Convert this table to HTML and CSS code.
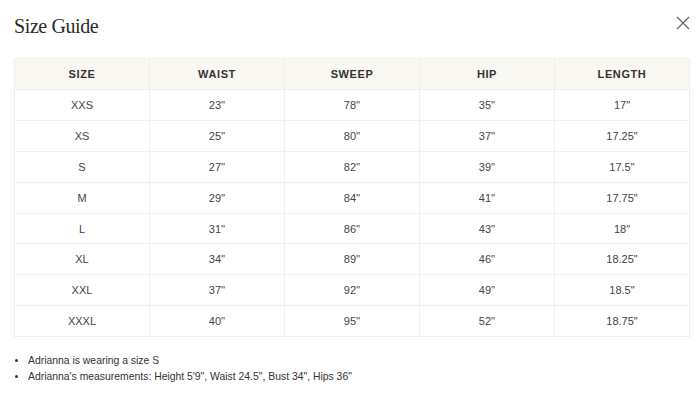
FILE: index.html
```html
<!DOCTYPE html>
<html>
<head>
<meta charset="utf-8">
<link rel="stylesheet" href="styles.css">
</head>
<body>
<div class="modal">
  <div class="head">
    <h1 class="title">Size Guide</h1>
    <button class="close" aria-label="Close">
      <svg width="14" height="14" viewBox="0 0 14 14"><path d="M1 1L13 13M13 1L1 13" stroke="#666" stroke-width="1.2" fill="none"/></svg>
    </button>
  </div>
  <table class="sizes">
    <thead>
      <tr><th>SIZE</th><th>WAIST</th><th>SWEEP</th><th>HIP</th><th>LENGTH</th></tr>
    </thead>
    <tbody>
      <tr><td>XXS</td><td>23''</td><td>78''</td><td>35''</td><td>17"</td></tr>
      <tr><td>XS</td><td>25''</td><td>80''</td><td>37''</td><td>17.25"</td></tr>
      <tr><td>S</td><td>27''</td><td>82''</td><td>39''</td><td>17.5"</td></tr>
      <tr><td>M</td><td>29''</td><td>84''</td><td>41''</td><td>17.75"</td></tr>
      <tr><td>L</td><td>31''</td><td>86''</td><td>43''</td><td>18"</td></tr>
      <tr><td>XL</td><td>34''</td><td>89''</td><td>46''</td><td>18.25"</td></tr>
      <tr><td>XXL</td><td>37''</td><td>92''</td><td>49''</td><td>18.5"</td></tr>
      <tr><td>XXXL</td><td>40''</td><td>95''</td><td>52''</td><td>18.75"</td></tr>
    </tbody>
  </table>
  <ul class="notes">
    <li>Adrianna is wearing a size S</li>
    <li>Adrianna's measurements: Height 5'9", Waist 24.5", Bust 34", Hips 36"</li>
  </ul>
</div>
</body>
</html>
```
FILE: styles.css
```css
html, body {
  margin: 0;
  padding: 0;
  background: #fff;
}
.modal {
  padding: 14px 10px 0 14px;
  font-family: "Liberation Sans", Arial, sans-serif;
  color: #333;
}
.head {
  display: flex;
  justify-content: space-between;
  align-items: flex-start;
  height: 44px;
}
.title {
  margin: 0;
  font-family: "Liberation Serif", "DejaVu Serif", serif;
  font-weight: 400;
  font-size: 20px;
  line-height: 24px;
  color: #2b2b2b;
  letter-spacing: -0.4px;
}
.close {
  border: 0;
  background: none;
  padding: 0;
  margin: 2px 0 0 0;
  width: 14px;
  height: 14px;
  display: block;
}
.close svg { display: block; }
.sizes {
  width: 676px;
  border-collapse: collapse;
  table-layout: fixed;
  font-size: 11px;
}
.sizes th, .sizes td {
  border: 1px solid #f3efe6;
  text-align: center;
  padding: 0;
}
.sizes th {
  background: #faf8f3;
  height: 30px;
  font-weight: 700;
  letter-spacing: 0.6px;
  color: #333;
}
.sizes td {
  height: 29.9px;
  color: #444;
}
.notes {
  margin: 16px 0 0 0;
  padding: 0 0 0 14px;
  font-size: 10.4px;
  line-height: 16px;
  color: #333;
}
```
